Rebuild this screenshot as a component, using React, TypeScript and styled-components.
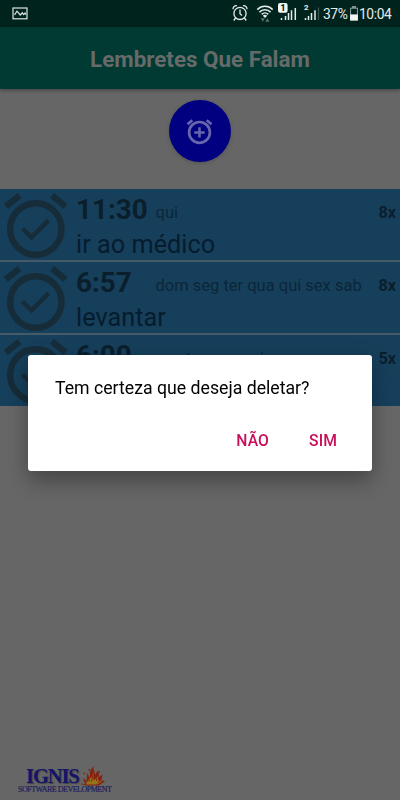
import React from 'react';
import styled, { createGlobalStyle } from 'styled-components';

const GlobalStyle = createGlobalStyle`
  *, *::before, *::after { box-sizing: border-box; }
  html, body { margin: 0; padding: 0; background: #666666; }
  body { font-family: Roboto, sans-serif; overflow: hidden; }
`;

const Screen = styled.div`
  width: 400px;
  height: 800px;
  display: flex;
  flex-direction: column;
  background: #666666;
`;

const StatusBar = styled.div`
  height: 27px;
  flex: none;
  display: flex;
  align-items: center;
  padding: 0 8px 0 12px;
  background: #00231d;
  color: #e4ecea;
`;

const StatusIcons = styled.svg`
  margin-left: auto;
  display: block;
`;

const StatusText = styled.span<{ $width: number }>`
  width: ${(p) => p.$width}px;
  padding-top: 1px;
  font-size: 13.8px;
  line-height: 26px;
  white-space: nowrap;
  letter-spacing: -0.4px;
`;

const AppBar = styled.header`
  height: 62px;
  flex: none;
  display: flex;
  align-items: center;
  justify-content: center;
  padding-top: 2px;
  background: #003a32;
  box-shadow: 0 1px 4px rgba(0, 0, 0, 0.4);
`;

const Title = styled.h1`
  margin: 0;
  font-size: 22.4px;
  line-height: 28px;
  font-weight: 700;
  color: #666b6a;
  white-space: nowrap;
`;

const AddArea = styled.div`
  height: 100px;
  flex: none;
  display: flex;
  justify-content: center;
  align-items: flex-start;
  padding-top: 11px;
`;

const AddButton = styled.button`
  width: 62px;
  height: 62px;
  padding: 0;
  border: 0;
  border-radius: 50%;
  background: #000080;
  display: flex;
  align-items: center;
  justify-content: center;
  box-shadow: 0 1px 4px rgba(0, 0, 0, 0.18);
`;

const List = styled.ul`
  list-style: none;
  margin: 0;
  padding: 0;
  display: flex;
  flex-direction: column;
`;

const Row = styled.li`
  height: 73px;
  display: flex;
  background: #163f5b;
  border-bottom: 2px solid #475a67;
  &:last-child { border-bottom: 0; height: 71px; }
`;

const RowIcon = styled.div`
  width: 76px;
  flex: none;
`;

const RowBody = styled.div`
  flex: 1;
  min-width: 0;
`;

const RowHead = styled.div`
  height: 41px;
  display: flex;
  align-items: flex-start;
  padding: 3px 4px 0 0;
  color: #0a1e2c;
`;

const Time = styled.span`
  width: 79.5px;
  flex: none;
  font-size: 27.8px;
  line-height: 36px;
  font-weight: 700;
`;

const Days = styled.span`
  padding-top: 11px;
  font-size: 16.5px;
  line-height: 20px;
  white-space: nowrap;
  color: #0c2639;
`;

const Repeat = styled.span`
  margin-left: auto;
  padding-top: 11px;
  font-size: 16.2px;
  line-height: 20px;
  font-weight: 700;
`;

const Label = styled.div`
  font-size: 25.3px;
  line-height: 30px;
  color: #061c2d;
  white-space: nowrap;
`;

const Footer = styled.footer`
  margin-top: auto;
  height: 38px;
  padding: 3px 0 0 18px;
  font-family: 'Liberation Serif', serif;
`;

const BrandLine = styled.div`
  height: 20px;
  display: flex;
  align-items: flex-start;
  padding-left: 8px;
`;

const BrandName = styled.span`
  width: 54px;
  font-size: 20.5px;
  line-height: 22px;
  font-weight: 700;
  letter-spacing: -1.1px;
  color: #151568;
  text-shadow: 1px 1px 1px #3f3f48;
`;

const BrandTagline = styled.div`
  font-size: 8px;
  line-height: 9px;
  letter-spacing: -0.5px;
  color: #20205e;
  -webkit-text-stroke: 0.2px #20205e;
  white-space: nowrap;
`;

const Scrim = styled.div`
  position: fixed;
  inset: 0;
  width: 400px;
  display: flex;
  justify-content: center;
  align-items: flex-start;
  padding-top: 355px;
`;

const Dialog = styled.div`
  width: 344px;
  height: 116px;
  display: flex;
  flex-direction: column;
  justify-content: space-between;
  padding: 21px 28px 18px 27px;
  background: #ffffff;
  border-radius: 3px;
  box-shadow: 0 12px 20px rgba(0, 0, 0, 0.24), 0 3px 22px rgba(0, 0, 0, 0.12);
`;

const Message = styled.p`
  margin: 0;
  font-size: 17.7px;
  line-height: 25px;
  color: #000000;
  white-space: nowrap;
`;

const Actions = styled.div`
  display: flex;
  justify-content: flex-end;
  gap: 40px;
  padding-right: 7px;
`;

const Action = styled.button`
  padding: 0;
  border: 0;
  background: none;
  font: 500 15.7px/24px Roboto, sans-serif;
  letter-spacing: 0.1px;
  color: #c90f59;
`;

const reminders = [
  { time: '11:30', days: 'qui', repeat: '8x', label: 'ir ao médico' },
  { time: '6:57', days: 'dom seg ter qua qui sex sab', repeat: '8x', label: 'levantar' },
  { time: '6:00', days: 'seg ter qua qui sex', repeat: '5x', label: '' },
];

const PictureIcon = () => (
  <svg width="16" height="13" viewBox="0 0 16 13" fill="none" stroke="#dce4e2">
    <rect x="1" y="1" width="14" height="10.8" strokeWidth="1.2" />
    <path d="M2.5 7.8 5 4.2 8.3 8 10.3 5.8 11.6 7.6 13 6 14 7.6" strokeWidth="1.2" />
  </svg>
);

const StatusCluster = () => (
  <StatusIcons width="91" height="27" viewBox="232 0 91 27" fill="none" stroke="#e4ecea">
    <circle cx="240" cy="13.4" r="6.1" strokeWidth="1.3" />
    <path d="M240 9.5v4.2l2 1.7M233 9.2a3.2 3.2 0 0 1 4-3.4M247 9.2a3.2 3.2 0 0 0-4-3.4M235.6 18l-1.8 2.5M244.4 18l1.8 2.5" strokeWidth="1.3" />
    <path d="M257.3 9.6a10.8 10.8 0 0 1 15.4 0M259.4 12.1a7.9 7.9 0 0 1 11.2 0M261.7 14.4a4.7 4.7 0 0 1 6.6 0" strokeWidth="1.5" />
    <path d="M262.8 15.7a3.2 3.2 0 0 1 4.4 0L265 18z" fill="#e4ecea" stroke="none" />
    <path d="M260.7 18.3h4.1l-2 3.5zM265.3 21.8h4.1l-2-3.5z" fill="#57736d" stroke="none" />
    <path d="M281.5 18v2M285.5 16v4M288.5 13v7M291.5 10.2v9.8M295.3 8v12" strokeWidth="1.5" />
    <rect x="278" y="3" width="9.6" height="9.8" rx="2" fill="#f2f6f5" stroke="none" />
    <text x="282.9" y="11" textAnchor="middle" fontFamily="Roboto, sans-serif" fontSize="8.5" fontWeight="900" fill="#00231d" stroke="none">1</text>
    <text x="306.2" y="10.2" textAnchor="middle" fontFamily="Roboto, sans-serif" fontSize="8" fontWeight="700" fill="#e4ecea" stroke="none">2</text>
    <path d="M305.5 18v2M308.5 16v4M311.5 13v7M315 10.2v9.8" strokeWidth="1.5" />
    <path d="M318.5 7.5V20" stroke="#3e5751" strokeWidth="1.3" />
  </StatusIcons>
);

const BatteryIcon = () => (
  <svg width="10" height="15" viewBox="0 0 10 15">
    <path d="M3 0h4v2H3z" fill="#7e918c" />
    <rect x="1.6" y="2.2" width="6.8" height="11.8" fill="none" stroke="#91a29e" strokeWidth="1" />
    <path d="M1.1 8.4h7.8v6.1H1.1z" fill="#f2f6f5" />
  </svg>
);

const AddAlarmIcon = () => (
  <svg width="28" height="28" viewBox="0 0 28 28" fill="none" stroke="#6666ac">
    <circle cx="13.5" cy="15.4" r="10.4" strokeWidth="2.7" />
    <path d="M1.5 7.3 6.3 3.2M20.7 3.2l4.8 4.1" strokeWidth="2.7" />
    <path d="M13.5 10.2v10.4M8.3 15.4h10.4" strokeWidth="2.5" />
  </svg>
);

const AlarmCheckIcon = () => (
  <svg width="76" height="71" viewBox="0 0 76 71" fill="none" stroke="#172c39">
    <circle cx="35.8" cy="40" r="25.7" strokeWidth="6.4" />
    <path d="M5.8 17.5 19.5 6.4M52 6.4 65.5 17.5" strokeWidth="6.4" />
    <path d="M22.5 39.5 31.5 48.3 48.5 31.3" strokeWidth="4.5" />
  </svg>
);

const FlameIcon = () => (
  <svg width="27" height="22" viewBox="80 764 27 22" fill="none">
    <path d="M80.5 783c3-.5 4 0 5-.5-2-1.5-1-3-3-5 3 .5 3 2 4.5 2.5-1-4 1-4-.5-8 3 2 2 4 3.5 4.5 0-4-1-6 3.5-11.5-1 5 2 5 1.5 9 2-2 1-3 3.5-4.5-1 3 1.5 4 0 7 2-1 2-2.5 4.5-2.5-2 2-.5 4-2 6 2-1 3 0 4 1-3 0-4 3-7 3.4H87c-3 0-4-1-6.5-1.4z" fill="#84200f" />
    <path d="M84 783.8c2.5-.3 3.5-1 2-3.5 3 1.5 2.5-1 3-4 1.5 2.5 3 0 4-5 1.5 4-.5 7 1 8 2-1 2-3 4-4.5-.5 3 1 4.5.5 6 1-1 2-1.5 3.5-1-2 2-3 3.5-6 3.8h-8c-2 0-3 .2-4 .2z" fill="#96741b" />
    <path d="m88.5 775 1 5.5M93 773l-1.5 7.5M97 775l-.5 5M100.5 779l-2.5 3.5" stroke="#84240f" strokeWidth="1" />
    <path d="M83.5 771.5l1.2 2M99.5 770l-1 2.5M89 768l.5 2" stroke="#84240f" strokeWidth="1.2" />
  </svg>
);

export default function App() {
  return (
    <>
      <GlobalStyle />
      <Screen>
        <StatusBar>
          <PictureIcon />
          <StatusCluster />
          <StatusText $width={26}>37%</StatusText>
          <BatteryIcon />
          <StatusText $width={33}>10:04</StatusText>
        </StatusBar>
        <AppBar>
          <Title>Lembretes Que Falam</Title>
        </AppBar>
        <AddArea>
          <AddButton aria-label="Adicionar lembrete">
            <AddAlarmIcon />
          </AddButton>
        </AddArea>
        <List>
          {reminders.map((r) => (
            <Row key={r.time}>
              <RowIcon>
                <AlarmCheckIcon />
              </RowIcon>
              <RowBody>
                <RowHead>
                  <Time>{r.time}</Time>
                  <Days>{r.days}</Days>
                  <Repeat>{r.repeat}</Repeat>
                </RowHead>
                <Label>{r.label}</Label>
              </RowBody>
            </Row>
          ))}
        </List>
        <Footer>
          <BrandLine>
            <BrandName>IGNIS</BrandName>
            <FlameIcon />
          </BrandLine>
          <BrandTagline>SOFTWARE DEVELOPMENT</BrandTagline>
        </Footer>
      </Screen>
      <Scrim>
        <Dialog role="dialog">
          <Message>Tem certeza que deseja deletar?</Message>
          <Actions>
            <Action>NÃO</Action>
            <Action>SIM</Action>
          </Actions>
        </Dialog>
      </Scrim>
    </>
  );
}
